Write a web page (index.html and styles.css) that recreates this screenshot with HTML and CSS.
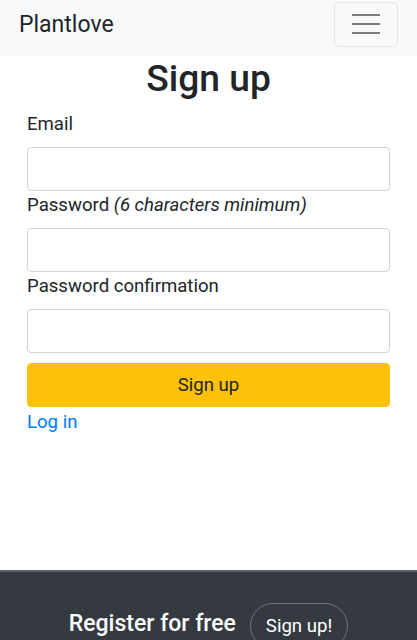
FILE: index.html
```html
<!DOCTYPE html>
<html lang="en">
<head>
<meta charset="utf-8">
<title>Plantlove - Sign up</title>
<link rel="stylesheet" href="styles.css">
</head>
<body>
<nav class="navbar">
  <a class="brand" href="#">Plantlove</a>
  <button class="toggler" type="button" aria-label="Toggle navigation">
    <svg width="30" height="30" viewBox="0 0 30 30"><path stroke="rgba(0,0,0,0.5)" stroke-width="2" stroke-linecap="butt" d="M1 6h28M1 15h28M1 24h28"/></svg>
  </button>
</nav>
<main class="container">
  <h1 class="title">Sign up</h1>
  <form class="form">
    <div class="group">
      <label class="label">Email</label>
      <input class="control" type="email">
    </div>
    <div class="group">
      <label class="label">Password <em>(6 characters minimum)</em></label>
      <input class="control" type="password">
    </div>
    <div class="group">
      <label class="label">Password confirmation</label>
      <input class="control" type="password">
    </div>
    <button class="submit" type="button">Sign up</button>
  </form>
  <a class="login" href="#">Log in</a>
</main>
<footer class="footer">
  <span class="footer-text">Register for free</span>
  <a class="pill" href="#">Sign up!</a>
</footer>
</body>
</html>
```

FILE: styles.css
```css
* { box-sizing: border-box; }
html, body { margin: 0; padding: 0; }
body {
  font-family: Roboto, "Liberation Sans", sans-serif;
  font-size: 18.6px;
  line-height: 28px;
  color: #212529;
  background: #fff;
}
.navbar {
  height: 56px;
  background: #f8f9fa;
  display: flex;
  align-items: center;
  justify-content: space-between;
  padding: 0 19px 10px 19px;
}
.brand {
  font-size: 23px;
  color: #212529;
  text-decoration: none;
  line-height: 1;
  margin-top: 2px;
}
.toggler {
  width: 64px;
  height: 45px;
  border: 1px solid #e3e4e5;
  border-radius: 5px;
  background: transparent;
  display: flex;
  align-items: center;
  justify-content: center;
  padding: 0;
  margin-top: 2px;
}
.container {
  padding: 0 27px;
  min-height: 514px;
}
.title {
  font-size: 37.2px;
  font-weight: 500;
  line-height: 44px;
  text-align: center;
  margin: 0 0 10px 0;
}
.form { display: flex; flex-direction: column; }
.group { display: flex; flex-direction: column; }
.label { margin-bottom: 9px; }
.label em { font-style: italic; }
.control {
  height: 44px;
  border: 1px solid #ced4da;
  border-radius: 4px;
  font: inherit;
  padding: 6px 13px;
  background: #fff;
}
.submit {
  margin-top: 10px;
  height: 44px;
  background: #ffc107;
  border: 1px solid #ffc107;
  border-radius: 4px;
  font: inherit;
  color: #212529;
}
.login {
  display: inline-block;
  color: #007bff;
  text-decoration: none;
  margin-top: 1px;
}
.footer {
  background: #343a40;
  border-top: 2px solid #5d6166;
  height: 90px;
  display: flex;
  align-items: flex-start;
  justify-content: center;
  gap: 14px;
  padding-top: 31px;
}
.footer-text {
  color: #fff;
  font-weight: 500;
  font-size: 23px;
  line-height: 28px;
  margin-top: 7px;
}
.pill {
  color: #fff;
  text-decoration: none;
  border: 1px solid #6c757d;
  border-radius: 24px;
  padding: 8px 15px;
  font-size: 18.6px;
  line-height: 28px;
}
```
